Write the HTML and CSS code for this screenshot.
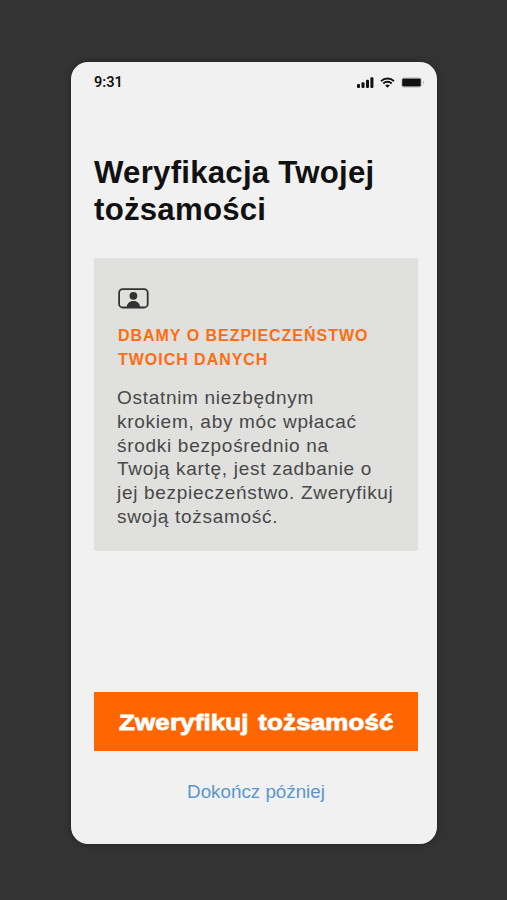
FILE: index.html
```html
<!DOCTYPE html>
<html lang="pl">
<head>
  <meta charset="UTF-8">
  <meta name="viewport" content="width=device-width, initial-scale=1.0">
  <title>Weryfikacja Twojej tożsamości</title>
  <link rel="stylesheet" href="styles.css">
</head>
<body>
  <main class="phone">
    <div class="status-bar">
      <span class="time">9:31</span>
      <div class="status-icons">
        <svg class="signal" width="17" height="11" viewBox="0 0 17 11">
          <rect x="0" y="7" width="3" height="4" rx="1"/>
          <rect x="4.5" y="5.2" width="3" height="5.8" rx="1"/>
          <rect x="9" y="2.8" width="3" height="8.2" rx="1"/>
          <rect x="13.4" y="0.2" width="3" height="10.8" rx="1"/>
        </svg>
        <svg class="wifi" width="15" height="11" viewBox="0 0 15 11">
          <path d="M1 4.1a9.4 9.4 0 0 1 13 0M3.3 6.5a6.1 6.1 0 0 1 8.4 0" fill="none" stroke="#111" stroke-width="1.9"/>
          <path d="M7.5 10.8L5.2 8.5a3.3 3.3 0 0 1 4.6 0z"/>
        </svg>
        <svg class="battery" width="24" height="11" viewBox="0 0 24 11">
          <rect x="0.5" y="0.5" width="20" height="10" rx="2.4" fill="none" stroke="#d0d0d0"/>
          <rect x="1.2" y="1.4" width="18.6" height="8.2" rx="1.4"/>
          <path d="M22 3.8a1.8 1.8 0 0 1 0 3.4z" fill="#b5b5b5"/>
        </svg>
      </div>
    </div>

    <h1>Weryfikacja Twojej tożsamości</h1>

    <section class="info">
      <svg class="id-icon" width="31" height="21" viewBox="0 0 31 21">
        <rect x="1.1" y="1.1" width="28.6" height="18.4" rx="3.6" fill="none" stroke="#333" stroke-width="1.8"/>
        <circle cx="15.4" cy="7.8" r="3.9"/>
        <path d="M8.6 19.6c.3-4.2 2.8-6.6 6.8-6.6s6.5 2.4 6.8 6.6z"/>
      </svg>
      <h2>Dbamy o bezpieczeństwo<br>Twoich danych</h2>
      <p>Ostatnim niezbędnym<br>krokiem, aby móc wpłacać<br>środki bezpośrednio na<br>Twoją kartę, jest zadbanie o<br>jej bezpieczeństwo. Zweryfikuj<br>swoją tożsamość.</p>
    </section>

    <button class="verify" type="button"><span>Zweryfikuj tożsamość</span></button>
    <a class="later" href="#">Dokończ później</a>
  </main>
</body>
</html>
```

FILE: styles.css
```css
* {
  box-sizing: border-box;
}
body {
  margin: 0;
  padding: 62px 0 0 71px;
  min-height: 900px;
  background: #333;
  font-family: "Liberation Sans", Arial, sans-serif;
}
.phone {
  display: flex;
  flex-direction: column;
  width: 366px;
  height: 781.5px;
  padding: 0 19px 0 23px;
  background: #f1f1f1;
  border-radius: 17px;
  box-shadow: 0 0 6px rgba(0, 0, 0, 0.35);
}

/* status bar */
.status-bar {
  display: flex;
  justify-content: space-between;
  align-items: center;
  height: 40px;
  margin-right: -7px;
}
.time {
  font-family: Roboto, sans-serif;
  font-size: 14.5px;
  font-weight: 600;
  color: #111;
  padding-top: 1px;
}
.status-icons {
  display: flex;
  align-items: center;
  gap: 6px;
  fill: #111;
}

h1 {
  margin: 52px 0 0;
  font-size: 31.2px;
  line-height: 37px;
  letter-spacing: 0.24px;
  color: #111;
}

/* info card */
.info {
  height: 293px;
  margin-top: 30px;
  padding: 30px 0 0 24px;
  background: #e0e0de;
}
.id-icon {
  display: block;
  fill: #333;
}
.info h2 {
  margin: 15px 0 0;
  font-size: 16px;
  line-height: 24px;
  letter-spacing: 0.97px;
  text-transform: uppercase;
  color: #ff6d10;
}
.info p {
  margin: 14px 0 0 -1px;
  font-size: 19px;
  line-height: 23.8px;
  letter-spacing: 0.7px;
  white-space: nowrap;
  color: #484848;
}

.verify {
  height: 59px;
  margin-top: 141px;
  padding: 2px 0 0;
  border: 0;
  background: #ff6600;
  color: #fff;
  font-family: inherit;
  font-size: 22px;
  font-weight: bold;
}
/* widened to get a black, extended cut */
.verify span {
  display: inline-block;
  transform: scaleX(1.18);
  word-spacing: 2px;
  letter-spacing: 0.1px;
  -webkit-text-stroke: 0.8px #fff;
}
.later {
  align-self: center;
  margin-top: 29px;
  font-size: 18.8px;
  line-height: 24px;
  color: #5b96cb;
  text-decoration: none;
}
```
